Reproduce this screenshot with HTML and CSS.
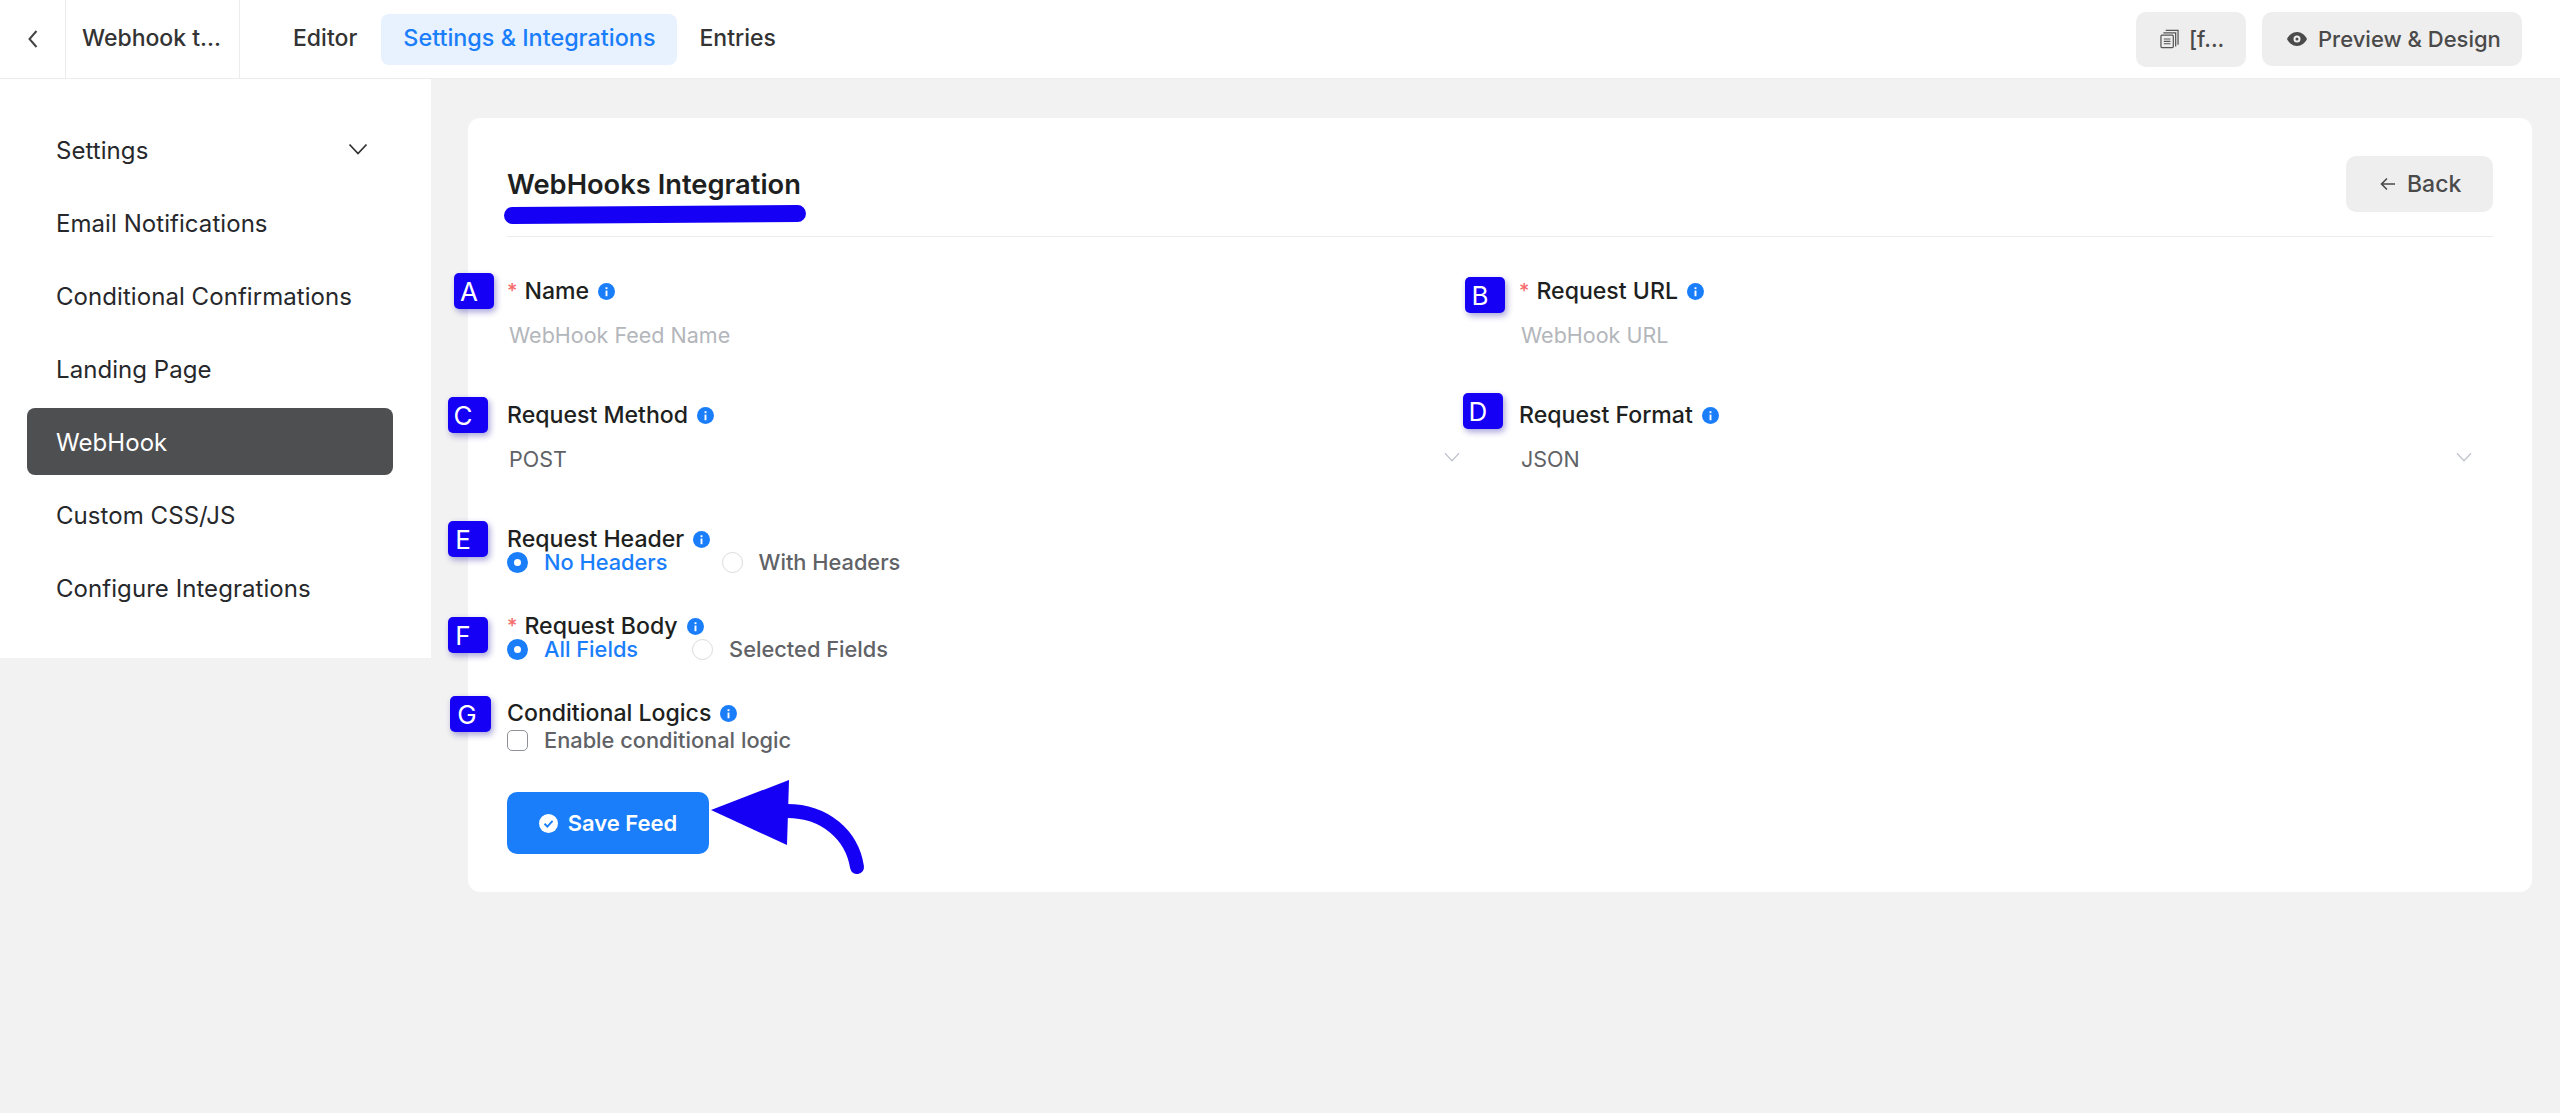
FILE: index.html
```html
<!DOCTYPE html>
<html lang="en">
<head>
<meta charset="utf-8">
<title>WebHooks Integration</title>
<link rel="stylesheet" href="styles.css">
</head>
<body>
<header class="topbar">
  <a class="back-link"><svg class="chev-left" viewBox="0 0 12 20"><path d="M9.5 2 2.5 10l7 8"/></svg></a>
  <div class="form-name">Webhook t...</div>
  <nav class="tabs">
    <a class="tab">Editor</a>
    <a class="tab tab-active">Settings &amp; Integrations</a>
    <a class="tab">Entries</a>
  </nav>
  <div class="top-actions">
    <button class="gray-btn copy-btn"><svg class="copy-icon" viewBox="0 0 20 20"><path d="M6 1h13v15M3.500 3.500H16.500V18"/><rect x="1" y="6" width="13" height="13" rx="1"/><path d="M4 10h7M4 12.500h7M4 15h7"/></svg><span>[f...</span></button>
    <button class="gray-btn preview-btn"><svg class="eye-icon" viewBox="0 0 20 14"><path fill-rule="evenodd" d="M10 0c4.500 0 8 3 10 7-2 4-5.500 7-10 7S2 11 0 7c2-4 5.500-7 10-7Zm0 3.500a3.500 3.500 0 1 0 0 7 3.500 3.500 0 0 0 0-7Zm0 2a1.500 1.500 0 1 1 0 3 1.500 1.500 0 0 1 0-3Z"/></svg><span>Preview &amp; Design</span></button>
  </div>
</header>
<div class="layout">
  <aside class="sidebar">
    <a class="side-item side-toggle"><span>Settings</span><svg class="chev-down" viewBox="0 0 20 12"><path d="M1.500 1.500 10 10.500l8.500-9"/></svg></a>
    <a class="side-item">Email Notifications</a>
    <a class="side-item">Conditional Confirmations</a>
    <a class="side-item">Landing Page</a>
    <a class="side-item side-active">WebHook</a>
    <a class="side-item">Custom CSS/JS</a>
    <a class="side-item">Configure Integrations</a>
  </aside>
  <main class="content">
    <section class="card">
      <div class="card-head">
        <h1 class="title">WebHooks Integration</h1>
        <button class="gray-btn back-btn"><svg class="arrow-left" viewBox="0 0 16 14"><path d="M15 7H1.500M7 1.500 1.500 7 7 12.500"/></svg><span>Back</span></button>
      </div>
      <div class="grid">
        <div class="field">
          <div class="label"><span class="req">*</span>Name<svg class="info" viewBox="0 0 18 18"><circle cx="9" cy="9" r="9"/><rect x="8" y="8" width="2" height="6"/><rect x="8" y="4.500" width="2" height="2"/></svg></div>
          <div class="input placeholder">WebHook Feed Name</div>
        </div>
        <div class="field">
          <div class="label"><span class="req">*</span>Request URL<svg class="info" viewBox="0 0 18 18"><circle cx="9" cy="9" r="9"/><rect x="8" y="8" width="2" height="6"/><rect x="8" y="4.500" width="2" height="2"/></svg></div>
          <div class="input placeholder">WebHook URL</div>
        </div>
        <div class="field">
          <div class="label">Request Method<svg class="info" viewBox="0 0 18 18"><circle cx="9" cy="9" r="9"/><rect x="8" y="8" width="2" height="6"/><rect x="8" y="4.500" width="2" height="2"/></svg></div>
          <div class="input select"><span>POST</span><svg class="select-chev" viewBox="0 0 20 12"><path d="M1.500 1.500 10 10.500l8.500-9"/></svg></div>
        </div>
        <div class="field">
          <div class="label">Request Format<svg class="info" viewBox="0 0 18 18"><circle cx="9" cy="9" r="9"/><rect x="8" y="8" width="2" height="6"/><rect x="8" y="4.500" width="2" height="2"/></svg></div>
          <div class="input select"><span>JSON</span><svg class="select-chev" viewBox="0 0 20 12"><path d="M1.500 1.500 10 10.500l8.500-9"/></svg></div>
        </div>
      </div>
      <div class="choice-group first-choice">
        <div class="label tight">Request Header<svg class="info" viewBox="0 0 18 18"><circle cx="9" cy="9" r="9"/><rect x="8" y="8" width="2" height="6"/><rect x="8" y="4.500" width="2" height="2"/></svg></div>
        <div class="choices">
          <label class="choice choice-on"><i class="radio radio-on"></i>No Headers</label>
          <label class="choice"><i class="radio"></i>With Headers</label>
        </div>
      </div>
      <div class="choice-group">
        <div class="label tight"><span class="req">*</span>Request Body<svg class="info" viewBox="0 0 18 18"><circle cx="9" cy="9" r="9"/><rect x="8" y="8" width="2" height="6"/><rect x="8" y="4.500" width="2" height="2"/></svg></div>
        <div class="choices">
          <label class="choice choice-on"><i class="radio radio-on"></i>All Fields</label>
          <label class="choice"><i class="radio"></i>Selected Fields</label>
        </div>
      </div>
      <div class="choice-group">
        <div class="label tight">Conditional Logics<svg class="info" viewBox="0 0 18 18"><circle cx="9" cy="9" r="9"/><rect x="8" y="8" width="2" height="6"/><rect x="8" y="4.500" width="2" height="2"/></svg></div>
        <div class="choices check-row">
          <label class="choice"><i class="checkbox"></i>Enable conditional logic</label>
        </div>
      </div>
      <button class="save-btn"><svg class="check-icon" viewBox="0 0 20 20"><circle cx="10" cy="10" r="10" fill="#fff"/><path d="M5.800 10.300 8.800 13.200 14.300 7.300" fill="none" stroke="#1a7efb" stroke-width="2"/></svg><span>Save Feed</span></button>

      <span class="underline"></span>
      <span class="badge badge-a">A</span>
      <span class="badge badge-b">B</span>
      <span class="badge badge-c">C</span>
      <span class="badge badge-d">D</span>
      <span class="badge badge-e">E</span>
      <span class="badge badge-f">F</span>
      <span class="badge badge-g">G</span>
      <svg class="callout" viewBox="0 0 160 100"><path class="callout-line" d="M82 36C120 36 147 60 152 92"/><path class="callout-head" d="M6 35 84 5 82 70Z"/></svg>
    </section>
  </main>
</div>
</body>
</html>
```
FILE: styles.css
```css
* { box-sizing: border-box; }
html, body { margin: 0; height: 1113px; overflow: hidden; }
body { background: #f2f2f2; color: #1e1f21; font-family: Inter, "Liberation Sans", sans-serif; font-size: 23px; }
button { font: inherit; border: 0; cursor: pointer; }

.topbar { display: flex; align-items: center; height: 79px; background: #fff; border-bottom: 1px solid #ececec; }
.back-link { display: flex; align-items: center; justify-content: center; width: 66px; height: 78px; border-right: 1px solid #ececec; }
.chev-left { width: 12px; height: 20px; fill: none; stroke: #444; stroke-width: 2; }
.form-name { display: flex; align-items: center; width: 174px; height: 78px; padding: 0 0 3px 16px; border-right: 1px solid #ececec; font-weight: 500; color: #333; }
.tabs { display: flex; gap: 1px; margin-left: 31px; }
.tab { display: flex; align-items: center; height: 51px; padding: 0 22px 3px; border-radius: 8px; font-weight: 500; color: #333; }
.tab-active { margin-left: 1px; padding-right: 21px; background: #e8f2ff; color: #1a7efb; font-size: 23.400px; }
.top-actions { display: flex; gap: 16px; margin-left: auto; margin-right: 38px; }
.gray-btn { display: flex; align-items: center; background: #eeeeee; border-radius: 10px; color: #4a4a4a; font-weight: 500; }
.copy-btn { width: 110px; height: 55px; padding-left: 24px; gap: 10px; font-size: 22px; }
.copy-icon { width: 19px; height: 20px; fill: none; stroke: #555; stroke-width: 1.300; }
.copy-icon rect { fill: #eeeeee; }
.preview-btn { width: 260px; height: 54px; padding-left: 25px; gap: 11px; font-size: 22px; }
.eye-icon { width: 20px; height: 14px; fill: #4a4a4a; }

.layout { display: flex; align-items: flex-start; }
.sidebar { display: flex; flex-direction: column; gap: 6px; width: 431px; height: 579px; padding: 37px 38px 0 27px; background: #fff; }
.side-item { display: flex; align-items: center; height: 67px; padding: 1px 0 0 29px; border-radius: 8px; font-size: 24px; letter-spacing: .06px; color: #26282b; }
.side-toggle { justify-content: space-between; padding-right: 25px; }
.chev-down { width: 20px; height: 12px; margin-top: -2px; fill: none; stroke: #333; stroke-width: 1.800; }
.side-active { background: #4e4f51; color: #fff; }

.content { flex: 1; padding: 39px 28px 0 37px; }
.card { position: relative; height: 774px; padding: 38px 39px 0 39px; background: #fff; border-radius: 12px; }
.card-head { display: flex; align-items: center; justify-content: space-between; height: 81px; padding-bottom: 25px; border-bottom: 1px solid #ececec; }
.title { margin: 2px 0 0; font-size: 27.300px; font-weight: 600; color: #1e1f21; }
.back-btn { width: 147px; height: 56px; padding-left: 34px; gap: 11px; }
.arrow-left { width: 16px; height: 14px; fill: none; stroke: #4a4a4a; stroke-width: 1.600; }

.grid { display: grid; grid-template-columns: 964px 964px; column-gap: 48px; margin-top: 39px; row-gap: 40px; }
.label { display: flex; align-items: center; height: 30px; font-size: 23.100px; font-weight: 500; color: #1e1f21; }
.label.tight { height: 22px; }
.req { margin-right: 7px; color: #f56c6c; font-size: 20px; }
.info { width: 17px; height: 17px; margin-left: 9px; fill: #1a7efb; }
.info rect { fill: #fff; }
.input { display: flex; align-items: center; height: 54px; padding: 3px 0 0 2px; font-size: 21.500px; }
.placeholder { color: #b3b6bb; }
.select { justify-content: space-between; padding-right: 10px; color: #606266; }
.select-chev { width: 18px; height: 10px; margin-top: -3px; fill: none; stroke: #c0c4cc; stroke-width: 1.500; }

.choice-group { margin-top: 41px; }
.first-choice { margin-top: 44px; }
.choices { display: flex; gap: 54px; height: 24px; }
.check-row { height: 24px; margin-top: 4px; }
.choice { display: flex; align-items: center; gap: 16px; font-size: 21.800px; font-weight: 500; color: #606266; }
.choice-on { color: #1a7efb; }
.radio { display: block; width: 21px; height: 21px; border: 1px solid #dadbdd; border-radius: 50%; background: #fff; }
.radio-on { border: 7px solid #1a7efb; }
.checkbox { display: block; width: 21px; height: 21px; border: 1px solid #8f9296; border-radius: 5px; background: #fff; }

.save-btn { display: flex; align-items: center; justify-content: center; gap: 10px; width: 202px; height: 62px; margin-top: 40px; background: #1a7efb; border-radius: 10px; color: #fff; font-size: 22px; font-weight: 600; }
.check-icon { width: 19px; height: 19px; }

.underline { position: absolute; left: 36px; top: 88px; width: 302px; height: 17px; background: #1500f5; border-radius: 9px; transform: rotate(-0.4deg); }
.badge { position: absolute; display: flex; align-items: center; justify-content: center; width: 40px; height: 36px; padding-right: 10px; background: #1500f5; border-radius: 5px; box-shadow: 2px 3px 6px rgba(40, 30, 160, .4); color: #fff; font-size: 26px; font-weight: 400; }
.badge-a { left: -14px; top: 155px; }
.badge-b { left: 997px; top: 159px; }
.badge-c { left: -20px; top: 279px; }
.badge-d { left: 995px; top: 275px; }
.badge-e { left: -20px; top: 403px; }
.badge-f { left: -20px; top: 499px; }
.badge-g { left: -18px; top: 578px; width: 41px; padding-right: 7px; }
.callout { position: absolute; left: 237px; top: 657px; width: 160px; height: 100px; }
.callout-head { fill: #1500f5; }
.callout-line { fill: none; stroke: #1500f5; stroke-width: 14; stroke-linecap: round; }
```
